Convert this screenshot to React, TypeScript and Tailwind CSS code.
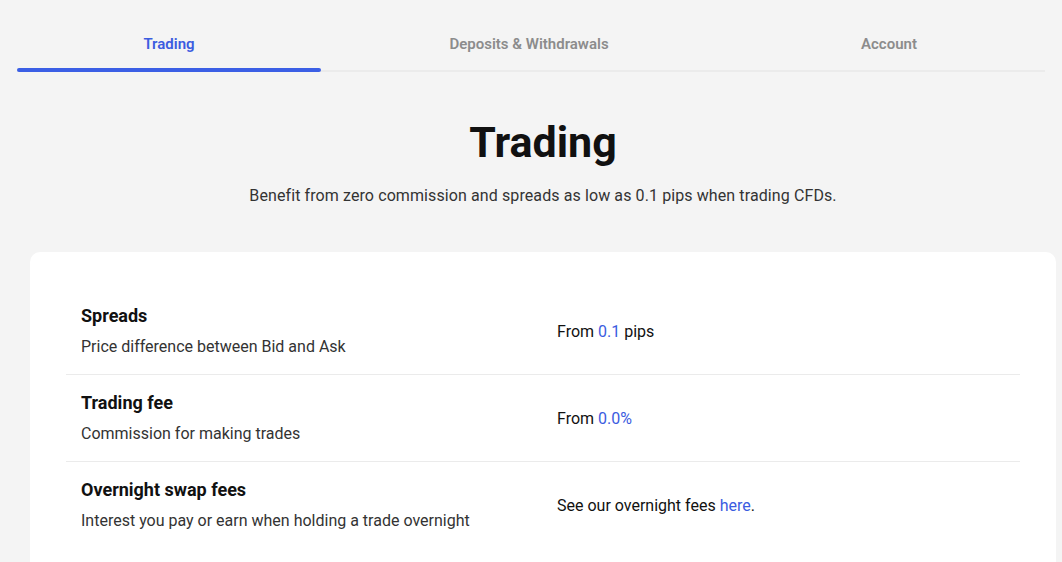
const tabs = ["Trading", "Deposits & Withdrawals", "Account"];

const rows = [
  {
    title: "Spreads",
    desc: "Price difference between Bid and Ask",
    value: (
      <>
        From <span className="text-[#3b5ce0]">0.1</span> pips
      </>
    ),
  },
  {
    title: "Trading fee",
    desc: "Commission for making trades",
    value: (
      <>
        From <span className="text-[#3b5ce0]">0.0%</span>
      </>
    ),
  },
  {
    title: "Overnight swap fees",
    desc: "Interest you pay or earn when holding a trade overnight",
    value: (
      <>
        See our overnight fees <a className="text-[#3b5ce0]">here</a>.
      </>
    ),
  },
];

export default function App() {
  return (
    <div className="min-h-screen bg-[#f4f4f4] font-['Roboto','Liberation_Sans',sans-serif] text-[#111]">
      {/* tabs */}
      <div className="mx-[17px] pt-[34px]">
        <div className="flex justify-between pr-[4px] border-b-2 border-[#ebebeb]">
          {tabs.map((t, i) => (
            <div key={t} className="w-[304px] flex flex-col items-center">
              <span
                className={
                  "text-[15px] leading-[20px] font-semibold " +
                  (i === 0 ? "text-[#3b5ce0]" : "text-[#8c8c8c]")
                }
              >
                {t}
              </span>
              <div
                className={
                  "mt-[14px] -mb-[2px] h-[4px] w-full rounded-full relative " +
                  (i === 0 ? "bg-[#3b5fe5]" : "bg-transparent")
                }
              />
            </div>
          ))}
        </div>
      </div>

      <div className="ml-[30px] mr-[6px]">
        {/* header */}
        <div className="flex flex-col items-center pt-[45px]">
          <h1 className="text-[43px] leading-[50px] font-bold text-[#111]">Trading</h1>
          <p className="mt-[17px] text-[16px] leading-[24px] tracking-[0.1px] text-[#333]">
            Benefit from zero commission and spreads as low as 0.1 pips when trading CFDs.
          </p>
        </div>

        {/* card */}
        <div className="mt-[44px] rounded-[10px] bg-white px-[36px] pt-[36px] pb-[36px]">
          {rows.map((r, i) => (
            <div
              key={r.title}
              className={
                "grid grid-cols-2 items-center pt-[16px] pb-[15px] " +
                (i < rows.length - 1 ? "border-b border-[#ebebeb]" : "")
              }
            >
              <div className="px-[15px]">
                <div className="text-[18px] leading-[24px] font-bold text-[#111]">{r.title}</div>
                <div className="mt-[7px] text-[16px] leading-[24px] text-[#333]">{r.desc}</div>
              </div>
              <div className="px-[14px] text-[16px] leading-[24px] text-[#111]">{r.value}</div>
            </div>
          ))}
        </div>
      </div>
    </div>
  );
}
